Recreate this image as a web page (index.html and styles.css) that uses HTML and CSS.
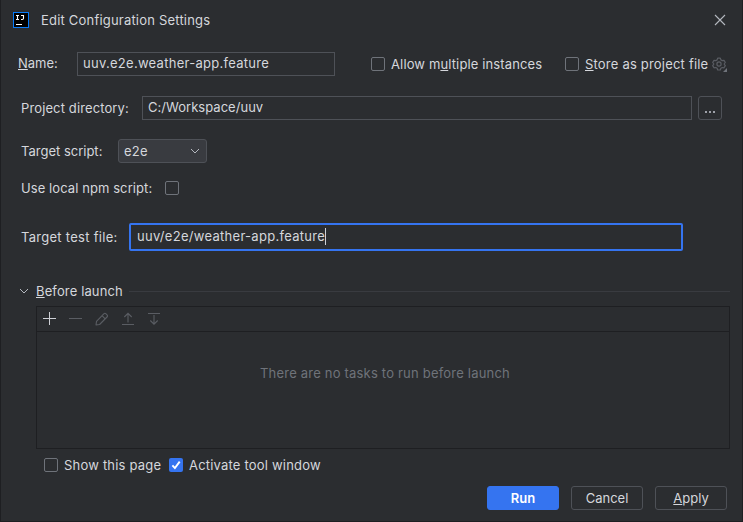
FILE: index.html
```
<!DOCTYPE html>
<html lang="en">
<head>
<meta charset="utf-8">
<title>Edit Configuration Settings</title>
<link rel="stylesheet" href="styles.css">
</head>
<body>
<main class="dialog">
  <header class="titlebar">
    <svg class="logo" width="16" height="16" viewBox="0 0 16 16"><rect x=".5" y=".5" width="15" height="15" fill="#000" stroke="#087cfa"/><path d="M3 3.5h3M4.5 3.5v4M3 7.5h3M8 3.5h2.5v2.8q0 1.2-1.2 1.2H8M3 12.5h6" fill="none" stroke="#fff" stroke-width="1.1"/></svg>
    <h1 class="title">Edit Configuration Settings</h1>
    <svg class="close" width="12" height="12" viewBox="0 0 12 12"><path d="M1 1l10 10M11 1L1 11" stroke="#b4b8bf" stroke-width="1.1"/></svg>
  </header>

  <div class="row name-row">
    <label class="label name-label"><u>N</u>ame:</label>
    <div class="field name-field">uuv.e2e.weather-app.feature</div>
    <label class="check allow"><i class="box"></i><span>Allow m<u>u</u>ltiple instances</span></label>
    <label class="check store"><i class="box"></i><span><u>S</u>tore as project file</span></label>
    <svg class="gear" width="16" height="16" viewBox="0 0 16 16"><path d="M5.7 1.1h2.6l.6 1.8 1.3.7 1.8-.3 1.3 2.2-1.2 1.5 1.2 1.6-1.3 2.2-1.8-.3-1.3.7-.6 1.8H5.7l-.6-1.8-1.3-.7-1.8.3L.7 8.6 1.9 7 .7 5.5 2 3.3l1.8.3 1.3-.7z" fill="none" stroke="#5a5d63" stroke-width="1.2" stroke-linejoin="round"/><circle cx="7" cy="7" r="2.1" fill="none" stroke="#5a5d63" stroke-width="1.2"/><path d="M15 11v4h-4z" fill="#6f737a"/></svg>
  </div>

  <div class="row project-row">
    <label class="label project-label">Project directory:</label>
    <div class="field project-field">C:/Workspace/uuv</div>
    <button class="browse" aria-label="Browse"><svg width="12" height="4" viewBox="0 0 12 4"><path d="M1 1h2v2H1zM5 1h2v2H5zM9 1h2v2H9z" fill="#9da0a8"/></svg></button>
  </div>

  <div class="row script-row">
    <label class="label script-label">Target script:</label>
    <div class="select"><span>e2e</span><svg width="10" height="6" viewBox="0 0 10 6"><path d="M1 1l4 4 4-4" fill="none" stroke="#b4b8bf"/></svg></div>
  </div>

  <div class="row npm-row">
    <label class="label npm-label">Use local npm script:</label>
    <i class="box"></i>
  </div>

  <div class="row file-row">
    <label class="label file-label">Target test file:</label>
    <div class="field file-field"><span>uuv/e2e/weather-app.feature</span><i class="caret"></i></div>
  </div>

  <div class="row launch-row">
    <svg class="chevron" width="10" height="6" viewBox="0 0 10 6"><path d="M1 1l4 4 4-4" fill="none" stroke="#b4b8bf"/></svg>
    <h2 class="launch-title"><u>B</u>efore launch</h2>
    <i class="rule"></i>
  </div>

  <section class="tasks">
    <div class="toolbar">
      <svg width="16" height="16" viewBox="0 0 16 16"><path d="M8.5 2v13M2 8.5h13" stroke="#ced0d6"/></svg>
      <svg width="16" height="16" viewBox="0 0 16 16"><path d="M2 8.5h13" stroke="#5a5d63"/></svg>
      <svg width="16" height="16" viewBox="0 0 16 16"><path d="M3 15l.5-3.6 7.3-7.6q1.1-1.1 2.2 0l1 1q1.1 1.1 0 2.2l-7.4 7.5zM9 5.7l3.2 3.2" fill="none" stroke="#5a5d63" stroke-width="1.1" stroke-linejoin="round"/></svg>
      <svg width="16" height="16" viewBox="0 0 16 16"><path d="M9 12.5V3M5.3 7L9 3.3 12.7 7M3 14.5h12" fill="none" stroke="#5a5d63" stroke-width="1.1"/></svg>
      <svg width="16" height="16" viewBox="0 0 16 16"><path d="M9 5v9M5.3 10.5L9 14.2l3.7-3.7M3 3.5h12" fill="none" stroke="#5a5d63" stroke-width="1.1"/></svg>
    </div>
    <p class="empty">There are no tasks to run before launch</p>
  </section>

  <div class="row options">
    <label class="check show"><i class="box"></i><span>Show this page</span></label>
    <label class="check activate"><i class="box checked"><svg width="14" height="14" viewBox="0 0 14 14"><path d="M3.4 7.3l2.5 2.8L10.7 3.6" fill="none" stroke="#fff" stroke-width="1.9"/></svg></i><span>Activate tool window</span></label>
  </div>

  <footer class="actions">
    <button class="btn primary">Run</button>
    <button class="btn">Cancel</button>
    <button class="btn"><span><u>A</u>pply</span></button>
  </footer>
</main>
</body>
</html>
```
FILE: styles.css
```
* { box-sizing: border-box; }
body {
  margin: 0;
  font: 13px/16px Inter, sans-serif;
  letter-spacing: 0.2px;
  color: #d5d7dc;
  background: #2b2d30;
}
.dialog {
  display: flex;
  flex-direction: column;
  width: 743px;
  height: 522px;
  border: 1px solid #1e1f22;
  border-top: 0;
  overflow: hidden;
  white-space: nowrap;
}
h1, h2, p { margin: 0; font: inherit; }
svg { display: block; flex: none; }
u {
  text-decoration: underline 1px;
  text-underline-offset: 1px;
  text-decoration-skip-ink: none;
}
button {
  padding: 0;
  font: inherit;
  letter-spacing: inherit;
  color: inherit;
  background: none;
}
.row { display: flex; align-items: center; flex: none; }
.label { flex: none; }

.titlebar { display: flex; align-items: center; height: 40px; padding: 0 16px 0 12px; }
.title { margin-left: 12px; }
.close { margin-left: auto; }

.field {
  flex: none;
  height: 24px;
  padding: 0 5px;
  border: 1px solid #4e5157;
  line-height: 20px;
}
.box {
  display: block;
  flex: none;
  width: 14px;
  height: 14px;
  border: 1px solid #6f737a;
  border-radius: 2px;
}
.box.checked { border: 0; background: #3574f0; }
.check { display: flex; align-items: center; gap: 6px; flex: none; }

.name-row { height: 24px; margin-top: 12px; padding-left: 17px; }
.name-label { width: 59px; padding-bottom: 2px; letter-spacing: 0; }
.name-field { width: 258px; letter-spacing: 0.28px; }
.allow { width: 194px; margin-left: 36px; letter-spacing: 0.13px; }
.store { width: 147px; }
.gear { margin-top: 1px; }

.project-row { height: 24px; margin-top: 20px; padding-left: 20px; }
.project-label { width: 121px; letter-spacing: 0.12px; }
.project-field { width: 550px; letter-spacing: 0.03px; }
.browse {
  display: flex;
  justify-content: center;
  width: 24px;
  height: 24px;
  margin-left: 6px;
  padding-top: 13px;
  border: 1px solid #4e5157;
  border-radius: 3px;
}

.script-row { height: 24px; margin-top: 19px; padding-left: 20px; }
.script-label { width: 97px; letter-spacing: 0; }
.select {
  display: flex;
  align-items: center;
  justify-content: space-between;
  width: 89px;
  height: 24px;
  padding: 0 6px 0 5px;
  border: 1px solid #4e5157;
  border-radius: 3px;
  background: #393b40;
}

.npm-row { height: 16px; margin-top: 17px; padding-left: 20px; }
.npm-label { width: 144px; letter-spacing: 0.08px; }

.file-row { height: 28px; margin-top: 27px; padding-left: 20px; }
.file-label { width: 108px; letter-spacing: 0.28px; }
.file-field {
  display: flex;
  align-items: center;
  width: 554px;
  height: 28px;
  padding: 0 6px 2px;
  border: 2px solid #3574f0;
  border-radius: 2px;
  letter-spacing: 0.29px;
}
.caret { width: 1px; height: 17px; background: #ced0d6; }

.launch-row { height: 16px; margin-top: 32px; padding: 0 12px 0 18px; }
.launch-title { width: 93px; margin-left: 7px; letter-spacing: 0.13px; }
.rule { flex: 1; height: 1px; margin-top: 1px; background: #393b40; }

.tasks {
  flex: none;
  height: 143px;
  margin: 7px 12px 0 35px;
  border: 1px solid #1e1f22;
}
.toolbar {
  display: flex;
  align-items: center;
  gap: 10px;
  height: 25px;
  padding: 0 0 2px 4px;
  border-bottom: 1px solid #1e1f22;
}
.empty {
  width: 252px;
  margin: 33px 0 0 223px;
  color: #6f737a;
}

.options { height: 16px; margin-top: 8px; padding-left: 43px; }
.show { width: 125px; }

.actions {
  display: flex;
  justify-content: flex-end;
  gap: 12px;
  margin-top: 13px;
  padding-right: 15px;
}
.btn {
  width: 72px;
  height: 24px;
  border: 1px solid #4e5157;
  border-radius: 3px;
  letter-spacing: 0;
}
.primary { border-color: #3574f0; background: #3574f0; color: #fff; font-weight: 600; }
```
